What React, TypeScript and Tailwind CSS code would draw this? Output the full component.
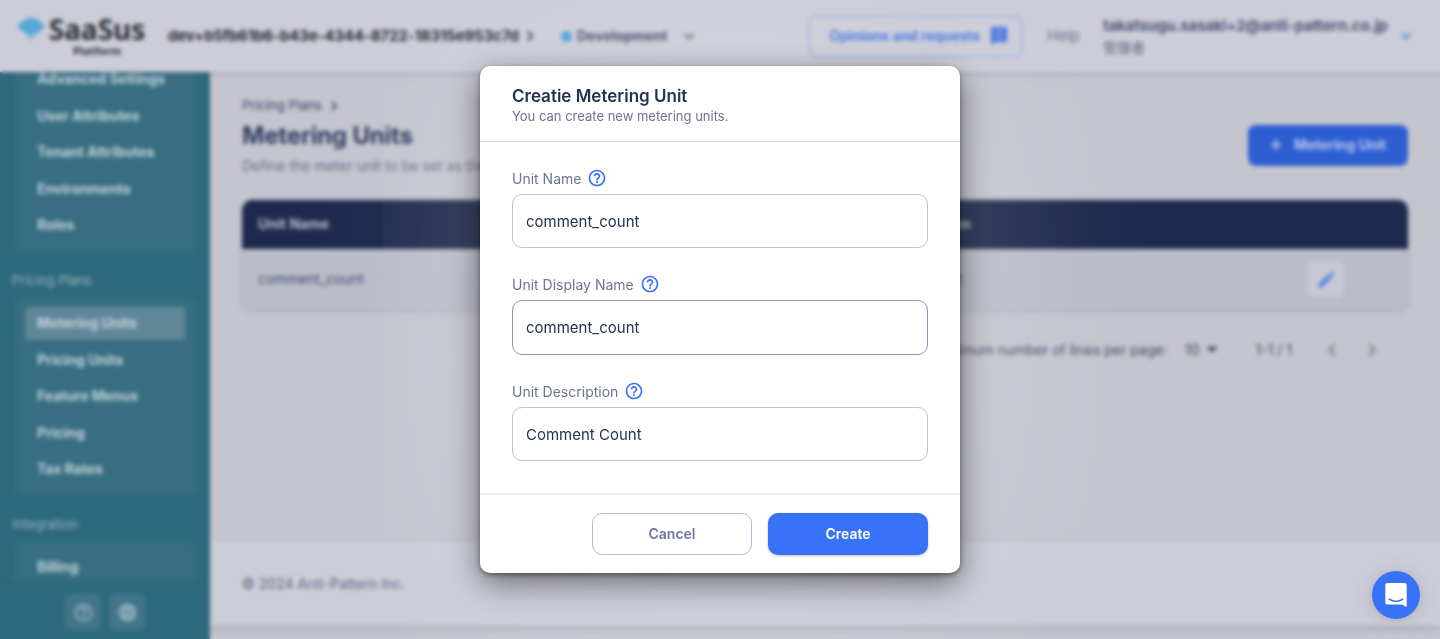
import React from "react";
import { MdHelpOutline, MdLanguage, MdEdit, MdArrowDropDown, MdOutlineExpandMore, MdChevronLeft, MdChevronRight } from "react-icons/md";

function NavItem({ label, active = false }: { label: string; active?: boolean }) {
  return (
    <div
      className={
        active
          ? "mb-[3.5px] flex h-[33px] items-center rounded-[4px] bg-[#5f8798] pl-3 text-sm font-bold tracking-[-0.08px] text-[#c6d1dc]"
          : "mb-[3.5px] flex h-[33px] items-center rounded-[4px] pl-3 text-sm font-bold tracking-[-0.08px] text-[#bfd0d9]"
      }
    >
      {label}
    </div>
  );
}

function NavGroup({ items, active, className = "" }: { items: string[]; active?: string; className?: string }) {
  return (
    <div className={"mx-[15px] shrink-0 rounded-[6px] bg-[#376e81] px-[10px] pt-[9px] pb-[5.5px] " + className}>
      {items.map((item) => (
        <NavItem key={item} label={item} active={item === active} />
      ))}
    </div>
  );
}

function NavHeading({ children }: { children: React.ReactNode }) {
  return <div className="h-[47px] shrink-0 pl-3 pt-[19px] text-[13px] leading-5 text-[#94b4bf]">{children}</div>;
}

function Sidebar() {
  return (
    <aside className="flex w-[210px] shrink-0 flex-col bg-[#2d697c]">
      <div className="flex h-[510px] flex-col overflow-hidden">
        <NavGroup
          className="-mt-[18.5px]"
          items={["Advanced Settings", "User Attributes", "Tenant Attributes", "Environments", "Roles"]}
        />
        <NavHeading>Pricing Plans</NavHeading>
        <NavGroup items={["Metering Units", "Pricing Units", "Feature Menus", "Pricing", "Tax Rates"]} active="Metering Units" />
        <NavHeading>Integration</NavHeading>
        <NavGroup items={["Billing"]} />
      </div>
      <div className="flex flex-1 justify-center gap-2 border-t border-[#285f73] pt-[11px]">
        {[MdHelpOutline, MdLanguage].map((Icon, i) => (
          <div key={i} className="flex size-9 items-center justify-center rounded-[6px] bg-[#417588] text-[#a8bfca]">
            <Icon size={21} />
          </div>
        ))}
      </div>
    </aside>
  );
}

function Header() {
  return (
    <header className="z-10 flex h-[72px] shrink-0 items-center bg-[#cccdd8] shadow-[0_2px_6px_rgba(90,90,130,0.25)]">
      <div className="flex w-[168px] items-start pl-4 pb-[2px]">
        <svg width="30" height="24" viewBox="0 0 30 24" className="mt-[4px] shrink-0">
          <path d="M1 9 L8 3 L15 0.500 L22 3 L29 9 L15 23 Z" fill="#7ab9dd" />
          <path d="M1 9 L8 3 L15 0.500 L22 3 L29 9 L24 14 L15 17 L6 14 Z" fill="#58a6d6" />
        </svg>
        <div className="ml-[3px] flex w-[96px] flex-col items-center font-['Noto_Sans',sans-serif] font-bold text-[#2e2f3a]">
          <span className="text-[28px] leading-[32px]">SaaSus</span>
          <span className="-mt-[1px] text-[11px] leading-[14px]">Platform</span>
        </div>
      </div>
      <div className="flex w-[393px] items-center text-[15px] font-bold tracking-[-0.14px] text-[#292a36]">
        <span className="w-[351px] whitespace-nowrap">dev+b5fb61b6-b43e-4344-8722-18315e953c7d</span>
        <MdChevronRight size={22} className="shrink-0" />
      </div>
      <div className="flex w-[247px] items-center text-sm font-bold tracking-[-0.05px] text-[#434b70]">
        <span className="mr-[5px] size-[11px] rounded-full bg-[#4a9fd8]" />
        <span className="w-[102px]">Development</span>
        <MdOutlineExpandMore size={20} />
      </div>
      <div className="flex h-[43px] w-[215px] items-center gap-[10px] rounded-[9px] border-2 border-[#a5b6e2] pl-[19px] text-sm font-bold tracking-[-0.13px] text-[#4f78de]">
        Opinions and requests
        <svg width="18" height="18" viewBox="0 0 18 18">
          <path d="M1 0h16v15H5l-4 3z" fill="#4672de" />
          <path d="M5 4h8M5 7.500h8M5 11h8" stroke="#8fa8e2" strokeWidth="1.400" />
        </svg>
      </div>
      <div className="ml-6 w-14 text-[15px] text-[#6c718d]">Help</div>
      <div className="flex flex-col">
        <span className="w-[293px] whitespace-nowrap text-[15px] leading-[22px] font-bold tracking-[-0.13px] text-[#505776]">takatsugu.sasaki+2@anti-pattern.co.jp</span>
        <span className="text-sm leading-[21px] text-[#646986]">管理者</span>
      </div>
      <MdOutlineExpandMore size={20} className="shrink-0 text-[#3570e0]" />
    </header>
  );
}

function Main() {
  return (
    <div className="flex flex-1 flex-col bg-[#c5c5cf]">
      <main className="flex h-[469px] flex-col px-8 pt-[23px]">
        <div className="flex items-start justify-between">
          <div>
            <div className="flex h-[22px] items-center gap-[2px] text-[13px] text-[#394162]">
              Pricing Plans
              <MdChevronRight size={20} />
            </div>
            <h1 className="mt-[3px] text-2xl leading-8 font-bold tracking-[-0.15px] text-[#323b60]">Metering Units</h1>
            <p className="mt-[4px] text-sm leading-5 text-[#6a6e88]">Define the meter unit to be set as the unit of measure.</p>
          </div>
          <div className="mt-[30px] flex h-[41px] w-40 items-center justify-center gap-[9px] rounded-lg bg-[#2d5ed2] pr-[3px] pb-px text-sm font-bold tracking-[-0.1px] text-[#b6c5ec]">
            <svg width="18" height="18" viewBox="0 0 18 18">
              <path d="M9 3.500v11M3.500 9h11" stroke="currentColor" strokeWidth="2.200" />
            </svg>
            Metering Unit
          </div>
        </div>
        <div className="mt-[24px] w-[1166px] shrink-0 overflow-hidden rounded-[10px] bg-[#babcc8] shadow-[0_1px_5px_rgba(90,90,140,0.28)]">
          <div className="grid h-[49px] grid-cols-[602px_1fr] items-center bg-[#1e2a4d] px-4 pb-[2px] text-sm font-bold text-[#b5b9ca]">
            <span>Unit Name</span>
            <span>Unit Description</span>
          </div>
          <div className="flex h-[61px] items-center px-4 pb-px text-sm text-[#434a6c]">
            <span className="w-[597px]">comment_count</span>
            <span className="w-[453px]">Comment Count</span>
            <span className="flex size-9 items-center justify-center rounded-md bg-[#c6c9d5] text-[#5480e0]">
              <MdEdit size={21} />
            </span>
          </div>
        </div>
        <div className="mt-[20px] flex h-10 items-center justify-end pr-[24px] text-sm text-[#434a6b]">
          <span className="mr-[17px]">Maximum number of lines per page:</span>
          <span className="text-[14.5px]">10</span>
          <MdArrowDropDown size={28} className="-ml-[2px] mr-[30px] mb-[2px]" />
          <span className="mr-[28px]">1-1 / 1</span>
          <MdChevronLeft size={24} className="mr-4 text-[#70758f]" />
          <MdChevronRight size={24} className="text-[#70758f]" />
        </div>
      </main>
      <footer className="flex h-[85px] items-center bg-[#cccdd8] pt-px pl-8 text-sm tracking-[0.02px] text-[#5f6482] shadow-[0_2px_6px_rgba(90,90,130,0.3)]">
        © 2024 Anti-Pattern Inc.
      </footer>
    </div>
  );
}

function Field({ label, value, focused = false }: { label: string; value: string; focused?: boolean }) {
  return (
    <div className="mb-[26px]">
      <div className="flex h-[26px] items-start gap-[6px] text-sm leading-5 text-[#6b7590]">
        <span className="pt-px">{label}</span>
        <MdHelpOutline size={20} className="text-[#3772f7]" />
      </div>
      <div
        className={
          focused
            ? "flex h-[55px] items-center rounded-[10px] border border-[#9097ad] px-[13px] pt-[2px] text-[15px] text-[#223354]"
            : "flex h-[54px] items-center rounded-[10px] border border-[#c4c4c8] px-[13px] pt-[2px] text-[15px] text-[#223354]"
        }
      >
        {value}
      </div>
    </div>
  );
}

function Dialog() {
  return (
    <div className="flex h-[507px] w-[480px] flex-col rounded-[10px] bg-white shadow-[0_2px_5px_rgba(0,0,0,0.4),0_10px_32px_rgba(0,0,0,0.5),0_0_200px_rgba(255,255,255,0.25)]">
      <div className="h-[76px] border-b border-[#dcdde0] px-8 pt-[19px]">
        <h2 className="text-[17px] leading-[22px] font-semibold text-[#223354]">Creatie Metering Unit</h2>
        <p className="text-[13px] leading-[18px] text-[#6b7590]">You can create new metering units.</p>
      </div>
      <div className="h-[351px] px-8 pt-[26px]">
        <Field label="Unit Name" value="comment_count" />
        <Field label="Unit Display Name" value="comment_count" focused />
        <Field label="Unit Description" value="Comment Count" />
      </div>
      <div className="flex flex-1 justify-end gap-4 border-t-2 border-[#efeff0] px-8 pt-[18px]">
        <button className="h-[42px] w-40 rounded-[10px] border border-[#b8bbd0] text-sm font-semibold text-[#6e759f]">Cancel</button>
        <button className="h-[42px] w-40 rounded-[10px] bg-[#3772f7] text-sm font-semibold text-white shadow-[0_1px_3px_rgba(0,0,0,0.25)]">Create</button>
      </div>
    </div>
  );
}

export default function App() {
  return (
    <div className="relative h-[639px] w-[1440px] overflow-hidden font-['Inter','Noto_Sans_CJK_JP',sans-serif]">
      <div className="flex h-full flex-col">
        <Header />
        <div className="flex min-h-0 flex-1">
          <Sidebar />
          <Main />
        </div>
      </div>
      <div className="absolute inset-0 z-20 flex justify-center pt-[66px] backdrop-blur-[2px]">
        <Dialog />
      </div>
      <div className="absolute right-5 bottom-5 z-30 flex size-12 items-center justify-center rounded-full bg-[#3772f7] shadow-[0_1px_6px_rgba(0,0,0,0.1),0_2px_24px_rgba(0,0,0,0.1)]">
        <svg width="24" height="26" viewBox="0 0 24 26">
          <path d="M3.500 1h17a2.200 2.200 0 0 1 2.200 2.200V25l-5-2.400H3.500a2.200 2.200 0 0 1-2.200-2.200V3.200A2.200 2.200 0 0 1 3.500 1z" fill="white" />
          <path d="M5.200 17.200c4 3 9.600 3 13.600 0" fill="none" stroke="#3772f7" strokeWidth="1.600" strokeLinecap="round" />
        </svg>
      </div>
    </div>
  );
}
